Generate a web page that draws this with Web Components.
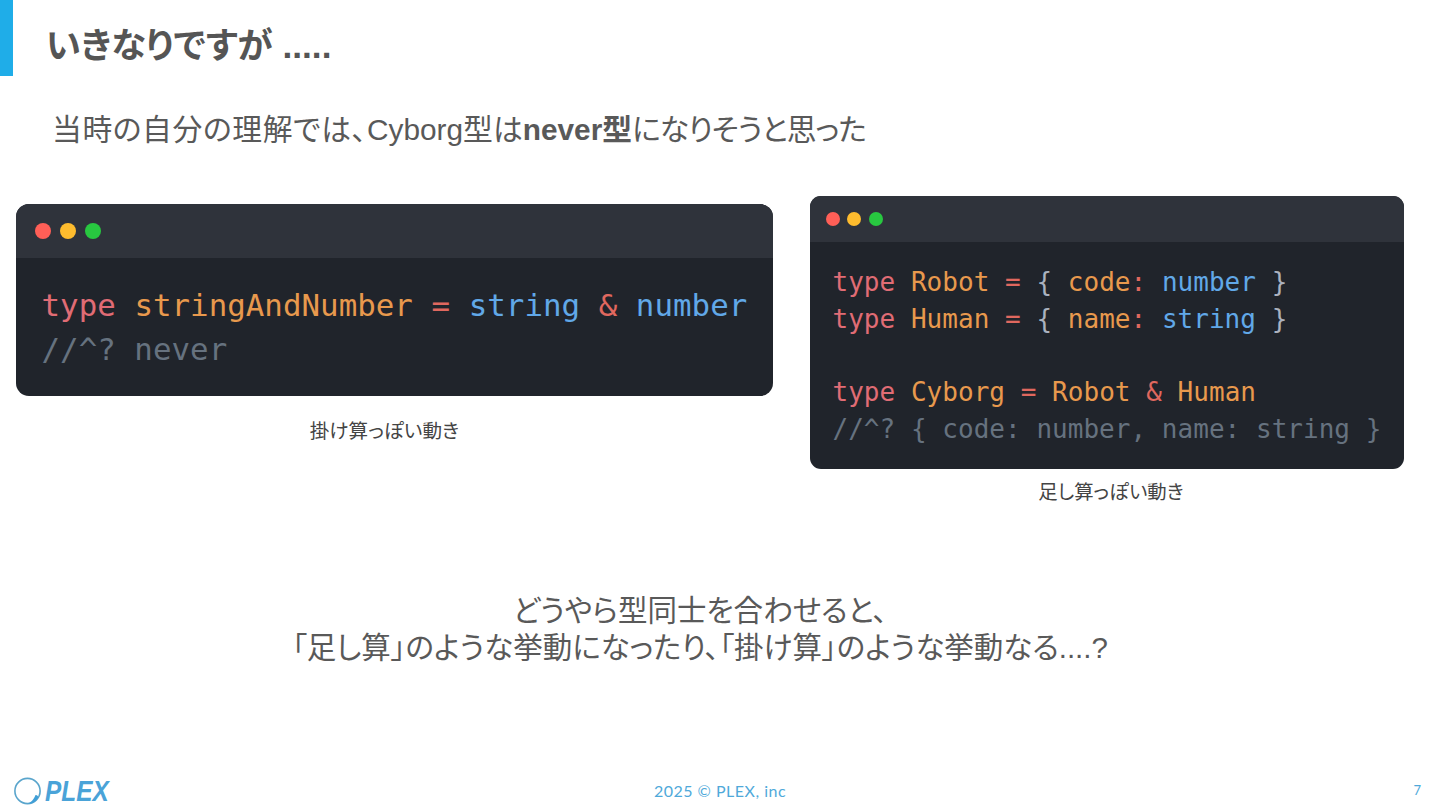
<!DOCTYPE html>
<html lang="ja">
<head>
<meta charset="utf-8">
<title>いきなりですが</title>
<style>
    html, body { margin: 0; padding: 0; background: #ffffff; }
    code-window i { font-style: normal; }
    code-window .k { color: #e06c75; }
    code-window .t { color: #e8994d; }
    code-window .o { color: #e0685f; }
    code-window .b { color: #61a8e8; }
    code-window .p { color: #abb2bf; }
    code-window .c { color: #66727f; }
    plex-slide b { font-weight: 700; }
    .wide { letter-spacing: 0.6px; }
    .tight { letter-spacing: -1px; }
</style>
</head>
<body>
<plex-slide>
    <slide-title slot="title">いきなりですが .....</slide-title>
    <span slot="lead"><span class="wide">当時の自分の理解では、</span>Cyborg型は<b>never型</b><span class="tight">になりそうと思った</span></span>

    <code-window slot="left" size="big" caption="掛け算っぽい動き">
        <div><i class="k">type</i> <i class="t">stringAndNumber</i> <i class="o">=</i> <i class="b">string</i> <i class="o">&amp;</i> <i class="b">number</i></div>
        <div><i class="c">//^? never</i></div>
    </code-window>

    <code-window slot="right" size="small" caption="足し算っぽい動き">
        <div><i class="k">type</i> <i class="t">Robot</i> <i class="o">=</i> <i class="p">{</i> <i class="t">code</i><i class="o">:</i> <i class="b">number</i> <i class="p">}</i></div>
        <div><i class="k">type</i> <i class="t">Human</i> <i class="o">=</i> <i class="p">{</i> <i class="t">name</i><i class="o">:</i> <i class="b">string</i> <i class="p">}</i></div>
        <div>&nbsp;</div>
        <div><i class="k">type</i> <i class="t">Cyborg</i> <i class="o">=</i> <i class="t">Robot</i> <i class="o">&amp;</i> <i class="t">Human</i></div>
        <div><i class="c">//^? { code: number, name: string }</i></div>
    </code-window>

    <span slot="message">どうやら型同士を合わせると、<br>「足し算」のような挙動になったり、「掛け算」のような挙動なる....?</span>

    <slide-footer slot="footer" page="7"></slide-footer>
</plex-slide>

<script>
const JP_FONT = '"Liberation Sans", "Noto Sans CJK JP", sans-serif';

class PlexSlide extends HTMLElement {
    constructor() {
        super();
        this.attachShadow({ mode: "open" });
        this.shadowRoot.innerHTML = `
            <style>
                :host {
                    display: flex;
                    flex-direction: column;
                    width: 1440px;
                    height: 810px;
                    overflow: hidden;
                    background: #ffffff;
                    color: #595959;
                    font-family: ${JP_FONT};
                    font-feature-settings: "palt";
                }
                .lead {
                    flex: none;
                    margin: 35px 0 0 52px;
                    height: 38px;
                    line-height: 38px;
                    font-size: 29.8px;
                }
                .cards {
                    flex: none;
                    display: flex;
                    align-items: flex-start;
                    height: 316px;
                    margin: 47px 0 0 16px;
                    gap: 37px;
                }
                .cards slot[name="left"]::slotted(*) { margin-top: 8px; }
                .message {
                    flex: none;
                    width: 1400px;
                    margin-top: 80px;
                    text-align: center;
                    font-size: 29.5px;
                    line-height: 37px;
                }
                .foot { flex: none; margin-top: auto; }
            </style>
            <slot name="title"></slot>
            <div class="lead"><slot name="lead"></slot></div>
            <div class="cards">
                <slot name="left"></slot>
                <slot name="right"></slot>
            </div>
            <div class="message"><slot name="message"></slot></div>
            <div class="foot"><slot name="footer"></slot></div>
        `;
    }
}

class SlideTitle extends HTMLElement {
    constructor() {
        super();
        this.attachShadow({ mode: "open" });
        this.shadowRoot.innerHTML = `
            <style>
                :host {
                    display: flex;
                    flex: none;
                    align-items: flex-start;
                    height: 76px;
                }
                .bar {
                    width: 13px;
                    height: 100%;
                    background: #1fade8;
                }
                h1 {
                    margin: 0 0 0 33px;
                    padding-top: 22px;
                    font-size: 35.3px;
                    line-height: 48px;
                    font-weight: 700;
                    color: #555555;
                }
            </style>
            <div class="bar"></div>
            <h1><slot></slot></h1>
        `;
    }
}

class CodeWindow extends HTMLElement {
    constructor() {
        super();
        this.attachShadow({ mode: "open" });
        const big = this.getAttribute("size") === "big";
        const m = big
            ? { w: 757, bar: 54, dot: 16, dotGap: 9, dotX: 19, font: 30.8, line: 43.5, pad: "26px 0 25px 25.5px", r: 13, capW: 737, capTop: 23, cap: 19.6 }
            : { w: 593.5, bar: 46, dot: 14, dotGap: 7.3, dotX: 16, font: 26, line: 36.7, pad: "22px 0 22px 22.5px", r: 11, capW: 602, capTop: 11, cap: 19.4 };
        this.shadowRoot.innerHTML = `
            <style>
                :host { display: block; flex: none; width: ${m.w}px; }
                .win {
                    border-radius: ${m.r}px;
                    overflow: hidden;
                    background: #20242b;
                }
                .bar {
                    display: flex;
                    align-items: center;
                    gap: ${m.dotGap}px;
                    height: ${m.bar}px;
                    padding-left: ${m.dotX}px;
                    background: #2f333b;
                }
                .bar span {
                    width: ${m.dot}px;
                    height: ${m.dot}px;
                    border-radius: 50%;
                }
                .code {
                    padding: ${m.pad};
                    font-family: "DejaVu Sans Mono", monospace;
                    font-size: ${m.font}px;
                    letter-spacing: 0.03px;
                    line-height: ${m.line}px;
                    font-feature-settings: normal;
                }
                ::slotted(div) { height: ${m.line}px; white-space: pre; }
                .cap {
                    width: ${m.capW}px;
                    margin-top: ${m.capTop}px;
                    text-align: center;
                    font-size: ${m.cap}px;
                    line-height: 24px;
                    color: #444444;
                }
            </style>
            <div class="win">
                <div class="bar">
                    <span style="background:#ff5f57"></span>
                    <span style="background:#febc2e"></span>
                    <span style="background:#28c840"></span>
                </div>
                <div class="code"><slot></slot></div>
            </div>
            <div class="cap">${this.getAttribute("caption")}</div>
        `;
    }
}

class PlexLogo extends HTMLElement {
    constructor() {
        super();
        this.attachShadow({ mode: "open" });
        this.shadowRoot.innerHTML = `
            <style>
                :host {
                    display: inline-flex;
                    align-items: center;
                    gap: 3px;
                    margin-top: 3px;
                    color: #4aa3d8;
                }
                svg { display: block; }
                span {
                    display: inline-block;
                    font-family: "Liberation Sans", sans-serif;
                    font-size: 29px;
                    font-style: italic;
                    font-weight: 700;
                    line-height: 30px;
                    transform: scaleX(0.84);
                    transform-origin: left center;
                }
            </style>
            <svg width="29" height="28" viewBox="0 0 29 28" fill="none">
                <circle cx="14.5" cy="14" r="12.6" stroke="#5aa5cc" stroke-width="1.6"/>
                <path d="M15 26.5 C18 25.5 21 22 22.5 18 C24.5 18 25.8 19.5 25 21 C23 24.5 19 27 15 26.5 Z" fill="#3f9fd8"/>
            </svg>
            <span>PLEX</span>
        `;
    }
}

class SlideFooter extends HTMLElement {
    constructor() {
        super();
        this.attachShadow({ mode: "open" });
        this.shadowRoot.innerHTML = `
            <style>
                :host {
                    display: grid;
                    grid-template-columns: 1fr auto 1fr;
                    grid-template-rows: 40px;
                    align-items: center;
                    height: 40px;
                    padding: 0 13px;
                    box-sizing: border-box;
                    color: #4fa9da;
                    font-family: Lato, "Noto Sans", sans-serif;
                    font-size: 16px;
                }
                .copy { letter-spacing: 0.5px; }
                .page { padding-right: 6px; text-align: right; font-size: 13px; }
            </style>
            <div><plex-logo></plex-logo></div>
            <div class="copy">2025 © PLEX, inc</div>
            <div class="page">${this.getAttribute("page")}</div>
        `;
    }
}

customElements.define("slide-title", SlideTitle);
customElements.define("code-window", CodeWindow);
customElements.define("plex-logo", PlexLogo);
customElements.define("slide-footer", SlideFooter);
customElements.define("plex-slide", PlexSlide);
</script>
</body>
</html>
